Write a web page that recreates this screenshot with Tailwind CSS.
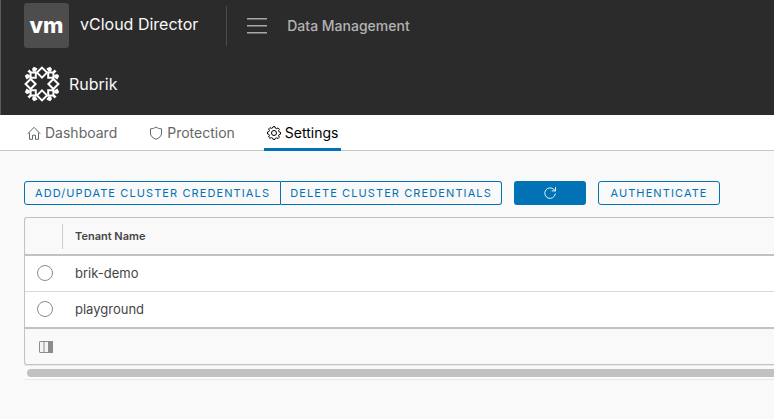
<!DOCTYPE html>
<html lang="en">
<head>
<meta charset="utf-8">
<meta name="viewport" content="width=device-width, initial-scale=1">
<title>vCloud Director</title>
<script src="https://cdn.jsdelivr.net/npm/@tailwindcss/browser@4"></script>
</head>
<body class="min-h-screen overflow-x-hidden bg-[#f9f9f9] font-['Inter',sans-serif] text-[#454545]">
<header class="border-l border-[#5c5c5c] bg-[#2b2b2b] pt-[3px] pl-[23px] pb-[13px]">
  <div class="flex items-center">
    <a href="#" class="flex items-center gap-[11px] text-base text-[#fafafa]">
      <span class="flex size-[45px] items-center justify-center rounded-[3px] bg-[#4d4d4d] pb-[2px] text-[22px] leading-none font-extrabold text-white">vm</span>
      <span class="pb-1">vCloud Director</span>
    </a>
    <span class="ml-7 h-10 w-px bg-[#4d4d4d]"></span>
    <button type="button" aria-label="Menu" class="ml-5 text-[#a8a8a8]">
      <svg class="block" width="20" height="16" viewBox="0 0 20 16" fill="currentColor"><path d="M0 0h20v1.500H0zM0 7h20v1.500H0zM0 14h20v1.500H0z"/></svg>
    </button>
    <a href="#" class="ml-5 text-sm font-medium text-[#b3b3b3]">Data Management</a>
  </div>
  <div class="mt-[18px] flex items-center gap-[9px]">
    <svg width="36" height="36" viewBox="-18 -18 36 36" aria-hidden="true">
      <defs>
        <g id="petal">
          <path d="M0-16.400 5-11.400 0-6.400-5-11.400Z" fill="none" stroke="#fff" stroke-width="2"/>
          <path d="M6.200-11.400h5.200v5.200H6.200z" fill="none" stroke="#fff" stroke-width="2"/>
          <path d="M4.400-15.400 8.200-17.200 10-15 9-12.200H6.500ZM15.400-4.400 17.200-8.200 15-10 12.200-9V-6.500ZM10.500-12 12.500-14.600 14.600-12.500 12-10.500Z" fill="#fff"/>
        </g>
      </defs>
      <use href="#petal"/><use href="#petal" transform="rotate(90)"/><use href="#petal" transform="rotate(180)"/><use href="#petal" transform="rotate(270)"/>
    </svg>
    <h1 class="text-base text-[#fafafa]">Rubrik</h1>
  </div>
</header>
<nav class="flex h-9 gap-8 border-b border-[#c8c8c8] bg-white pl-[27px] text-sm text-[#666]">
  <a href="#" class="flex items-center gap-1">
    <svg width="14" height="14" viewBox="0 0 14 14" fill="none" stroke="currentColor" stroke-linejoin="round" stroke-linecap="round"><path d="M1 7.500 7 1.300l6 6.200M2.500 7v6.300h3V9.200h3v4.100h3V7"/></svg>
    Dashboard
  </a>
  <a href="#" class="flex items-center gap-1">
    <svg width="14" height="14" viewBox="0 0 14 14" fill="none" stroke="currentColor" stroke-linejoin="round"><path d="M7 1C5.500 2.200 3.700 2.700 1.500 2.800V7c0 3.200 2.200 5 5.500 6.300 3.300-1.300 5.500-3.100 5.500-6.300V2.800C10.300 2.700 8.500 2.200 7 1Z"/></svg>
    Protection
  </a>
  <a href="#" aria-current="page" class="-mx-[3px] -mb-px flex items-center gap-1 border-b-3 border-[#0072b5] px-[3px] pt-[3px] text-black">
    <svg width="14" height="14" viewBox="0 0 14 14" fill="none" stroke="currentColor" stroke-linejoin="round"><path d="m5.700 1 .3-.3h2l.4 1.500 1.200.5 1.400-.8 1.400 1.400-.8 1.400.5 1.200 1.400.4v1.900l-1.400.4-.5 1.200.8 1.400-1.400 1.400-1.400-.8-1.200.5L8 13.400H6l-.4-1.300-1.200-.5-1.400.8L1.600 11l.8-1.400-.5-1.200L.5 8V6l1.400-.4.5-1.200L1.600 3 3 1.600l1.400.8 1.200-.5Z"/><circle cx="7" cy="7" r="2.500"/></svg>
    Settings
  </a>
</nav>
<main class="pt-[30px] pl-6">
  <div class="flex gap-3 text-[11px] tracking-widest text-[#0072b5]">
    <div class="flex shrink-0">
      <button type="button" class="h-6 w-[257px] rounded-l-[3px] border border-[#0072b5] whitespace-nowrap">ADD/UPDATE CLUSTER CREDENTIALS</button>
      <button type="button" class="h-6 w-[221px] rounded-r-[3px] border border-l-0 border-[#0072b5] whitespace-nowrap">DELETE CLUSTER CREDENTIALS</button>
    </div>
    <button type="button" aria-label="Refresh" class="flex h-6 w-[72px] shrink-0 items-center justify-center rounded-[3px] bg-[#0072b5] text-white">
      <svg width="14" height="14" viewBox="0 0 14 14" fill="none" stroke="currentColor" stroke-width=".9" stroke-linecap="round"><path d="M12.300 8A5.300 5.300 0 1 1 11 3.600l1.300 1.200M12.500 1.500v3.400H9.100"/></svg>
    </button>
    <button type="button" class="h-6 w-[122px] shrink-0 rounded-[3px] border border-[#0072b5] whitespace-nowrap">AUTHENTICATE</button>
  </div>
  <section class="mt-3 rounded-l-[3px] border border-r-0 border-[#c2c2c2]">
    <table class="w-full border-collapse text-left text-[13px]">
      <thead>
        <tr class="h-[37px] border-b-2 border-[#c2c2c2] text-[11px]">
          <th aria-label="Select" class="w-[38px] p-0"><div class="h-[25px] border-r border-[#ccc]"></div></th>
          <th scope="col" class="px-3 py-0 font-semibold">Tenant Name</th>
        </tr>
      </thead>
      <tbody class="bg-white">
        <tr class="h-9 border-b border-[#d8d8d8]">
          <td class="p-0 pl-3"><input id="t1" type="radio" name="tenant" class="block size-4 appearance-none rounded-full border border-[#8c8c8c] bg-white checked:border-4 checked:border-[#0072b5]"></td>
          <td class="px-3 py-0"><label for="t1">brik-demo</label></td>
        </tr>
        <tr class="h-9">
          <td class="p-0 pl-3"><input id="t2" type="radio" name="tenant" class="block size-4 appearance-none rounded-full border border-[#8c8c8c] bg-white checked:border-4 checked:border-[#0072b5]"></td>
          <td class="px-3 py-0"><label for="t2">playground</label></td>
        </tr>
      </tbody>
    </table>
    <div class="flex h-[37px] items-center border-t-2 border-[#c2c2c2] pl-[14px]">
      <button type="button" aria-label="Choose columns" class="text-[#8c8c8c]">
        <svg class="block" width="14" height="12" viewBox="0 0 14 12"><rect x=".5" y=".5" width="13" height="11" rx=".6" fill="#f4f4f4" stroke="currentColor"/><path d="M5 0v12" stroke="currentColor"/><path d="M9 0h5v12H9z" fill="currentColor"/></svg>
      </button>
    </div>
  </section>
  <div class="border-y border-[#e8e8e8] bg-[#fafafa] pt-[3px] pb-[2px] pl-[3px]">
    <div class="h-2 rounded-l-full bg-[#c1c1c1]"></div>
  </div>
</main>
</body>
</html>
